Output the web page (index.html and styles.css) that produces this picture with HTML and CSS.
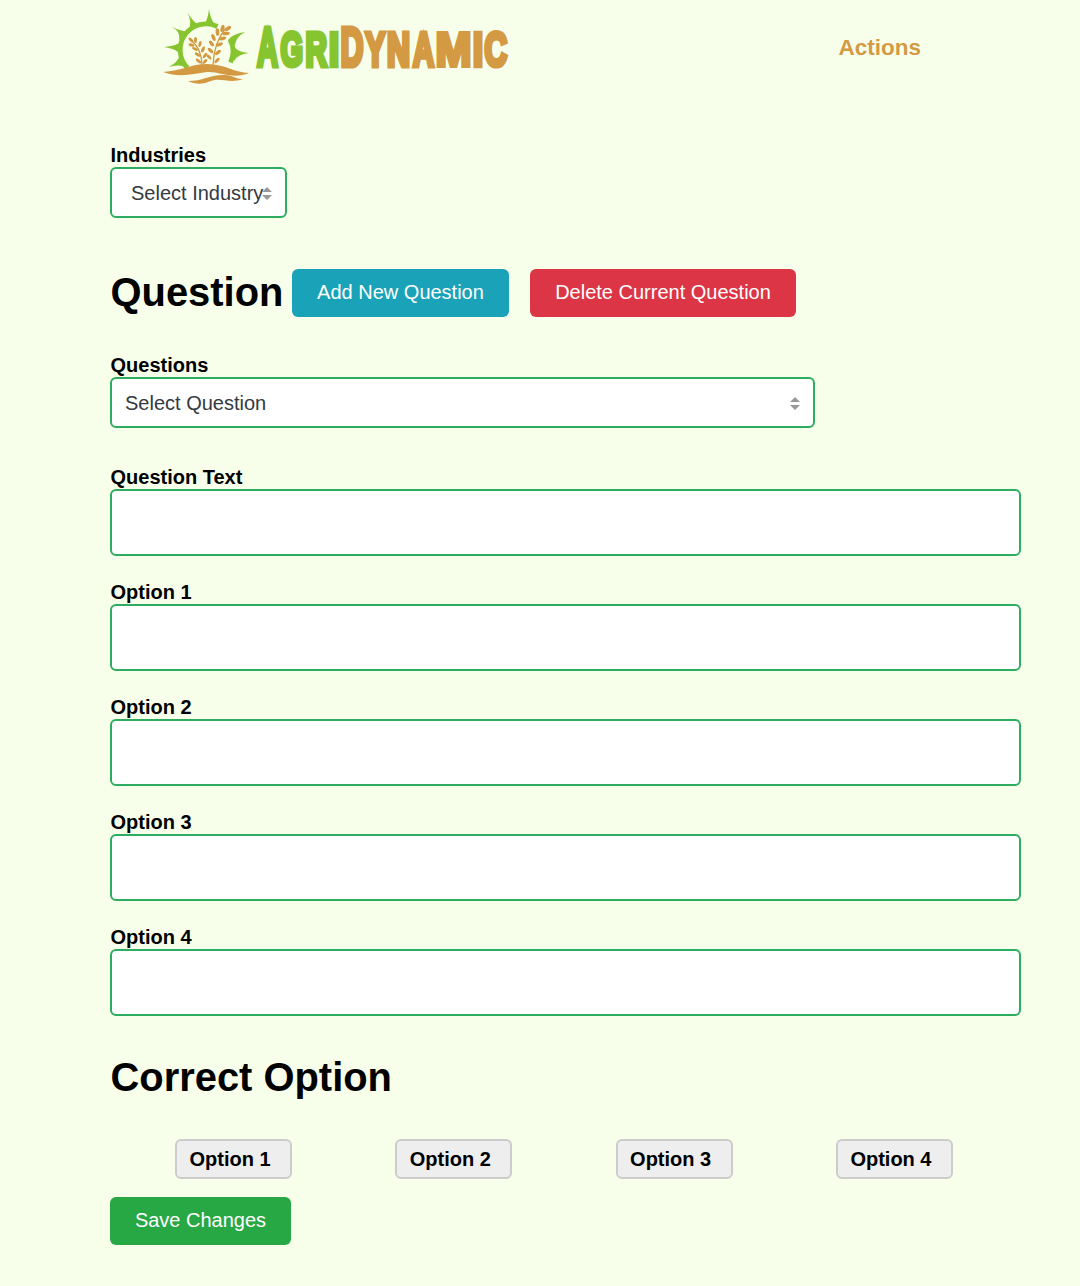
FILE: index.html
```html
<!DOCTYPE html>
<html lang="en">
<head>
<meta charset="utf-8">
<title>AgriDynamic</title>
<link rel="stylesheet" href="styles.css">
</head>
<body>
<header class="header">
  <svg class="logo" width="370" height="90" viewBox="160 0 370 90" role="img" aria-label="AgriDynamic">
    <path class="ring" d="M187.500 68A26 26 0 0 1 217.500 26.500M230 39.500A26 26 0 0 1 230.500 62.500"/>
    <g class="sun">
      <path d="M204 25Q208 19 209 9Q210.500 19 215 25ZM189 30Q192 22 187.500 12.500Q193 22 200 26ZM179 40Q181 32 172 27Q182 32 189 31ZM179.500 54Q177 49 164 47Q177 46 182 41ZM186 67Q179 64 169 67Q178 62 180 55ZM228 40Q232 34 245 32Q236 37 235 45ZM234 46Q237 52 249 53Q238 54 234 61Z"/>
    </g>
    <g class="field">
      <path d="M163 72C181 71 191 64 207 64C225 64 235 73 249 73C233 80 219 71 207 72C193 74 179 78 163 72Z"/>
      <path d="M188 81C203 81 211 74 225 75C233 75 235 79 243 79C229 84 221 77 211 81C204 84 196 85 188 81Z"/>
    </g>
    <g class="stalk">
      <path d="M191 40Q202 49 202 66M226 28Q214 42 213 65"/>
    </g>
    <g class="grain">
      <ellipse cx="191" cy="40" rx="1.5" ry="3.1" transform="rotate(-42 191 40)"/>
      <ellipse cx="195.500" cy="40" rx="1.5" ry="3"/>
      <ellipse cx="191.500" cy="45" rx="1.5" ry="3.1" transform="rotate(-75 191.500 45)"/>
      <ellipse cx="200" cy="44" rx="1.5" ry="3.1" transform="rotate(12 200 44)"/>
      <ellipse cx="195" cy="49" rx="1.5" ry="3.2" transform="rotate(-65 195 49)"/>
      <ellipse cx="203" cy="49.500" rx="1.5" ry="3.2" transform="rotate(25 203 49.500)"/>
      <ellipse cx="197.500" cy="54.500" rx="1.5" ry="3.2" transform="rotate(-58 197.500 54.500)"/>
      <ellipse cx="205" cy="55.500" rx="1.5" ry="3.2" transform="rotate(35 205 55.500)"/>
      <ellipse cx="198.500" cy="61" rx="1.5" ry="3.2" transform="rotate(-48 198.500 61)"/>
      <ellipse cx="205" cy="61.500" rx="1.5" ry="3" transform="rotate(45 205 61.500)"/>
      <ellipse cx="228" cy="28.500" rx="1.9" ry="3.5" transform="rotate(55 228 28.500)"/>
      <ellipse cx="222.500" cy="28.500" rx="1.9" ry="3.7" transform="rotate(15 222.500 28.500)"/>
      <ellipse cx="226" cy="33.500" rx="1.7" ry="3.8" transform="rotate(82 226 33.500)"/>
      <ellipse cx="217.500" cy="32" rx="1.9" ry="3.8" transform="rotate(-5 217.500 32)"/>
      <ellipse cx="222.500" cy="38.500" rx="1.8" ry="3.7" transform="rotate(75 222.500 38.500)"/>
      <ellipse cx="213.500" cy="37.500" rx="1.8" ry="3.7" transform="rotate(-20 213.500 37.500)"/>
      <ellipse cx="219.500" cy="44.500" rx="1.7" ry="3.6" transform="rotate(65 219.500 44.500)"/>
      <ellipse cx="211.500" cy="43.500" rx="1.7" ry="3.5" transform="rotate(-35 211.500 43.500)"/>
      <ellipse cx="218" cy="52.500" rx="1.7" ry="3.5" transform="rotate(50 218 52.500)"/>
      <ellipse cx="210.500" cy="50.500" rx="1.7" ry="3.5" transform="rotate(-45 210.500 50.500)"/>
      <ellipse cx="217" cy="60.500" rx="1.6" ry="3.4" transform="rotate(42 217 60.500)"/>
      <ellipse cx="209" cy="57" rx="1.5" ry="3.1" transform="rotate(-45 209 57)"/>
    </g>
    <text class="wordmark" y="65.500"><tspan class="green cap" x="257" textLength="21" lengthAdjust="spacingAndGlyphs">A</tspan><tspan class="green" x="280.500" textLength="22.500" lengthAdjust="spacingAndGlyphs">G</tspan><tspan class="green" x="305.500" textLength="21.500" lengthAdjust="spacingAndGlyphs">R</tspan><tspan class="green narrow" x="328.800" textLength="10.500" lengthAdjust="spacingAndGlyphs">I</tspan><tspan class="cap" x="340.500" textLength="23" lengthAdjust="spacingAndGlyphs">D</tspan><tspan x="365.500" textLength="19.500" lengthAdjust="spacingAndGlyphs">Y</tspan><tspan x="387" textLength="23" lengthAdjust="spacingAndGlyphs">N</tspan><tspan x="413" textLength="21" lengthAdjust="spacingAndGlyphs">A</tspan><tspan class="wide" x="435.500" textLength="36" lengthAdjust="spacingAndGlyphs">M</tspan><tspan class="narrow" x="472.800" textLength="10.500" lengthAdjust="spacingAndGlyphs">I</tspan><tspan x="484.500" textLength="22.500" lengthAdjust="spacingAndGlyphs">C</tspan></text>
  </svg>
  <a class="actions">Actions</a>
</header>
<main class="content">
  <div class="field-group">
    <label class="label">Industries</label>
    <div class="select select-small"><span>Select Industry</span><svg class="arrows" width="10" height="13" viewBox="0 0 10 13"><path d="M0 5L5 0L10 5ZM0 8L5 13L10 8Z"/></svg></div>
  </div>
  <div class="question-bar">
    <h1 class="title">Question</h1>
    <button class="btn info">Add New Question</button>
    <button class="btn danger">Delete Current Question</button>
  </div>
  <div class="field-group">
    <label class="label">Questions</label>
    <div class="select select-wide"><span>Select Question</span><svg class="arrows" width="10" height="13" viewBox="0 0 10 13"><path d="M0 5L5 0L10 5ZM0 8L5 13L10 8Z"/></svg></div>
  </div>
  <div class="inputs">
    <div><label class="label" for="question">Question Text</label><input class="input" id="question"></div>
    <div><label class="label" for="o1">Option 1</label><input class="input" id="o1"></div>
    <div><label class="label" for="o2">Option 2</label><input class="input" id="o2"></div>
    <div><label class="label" for="o3">Option 3</label><input class="input" id="o3"></div>
    <div><label class="label" for="o4">Option 4</label><input class="input" id="o4"></div>
  </div>
  <h1 class="title correct">Correct Option</h1>
  <div class="choices">
    <button class="choice">Option 1</button>
    <button class="choice">Option 2</button>
    <button class="choice">Option 3</button>
    <button class="choice">Option 4</button>
  </div>
  <button class="btn save">Save Changes</button>
</main>
</body>
</html>
```
FILE: styles.css
```css
* { box-sizing: border-box; }
body {
  margin: 0;
  min-height: 1286px;
  background: #f7ffeb;
  color: #000;
  font: 20px/24px "Liberation Sans", Arial, sans-serif;
}
button, input { font: inherit; margin: 0; }
.header {
  display: flex;
  justify-content: space-between;
  height: 143px;
  padding: 0 159px 0 160px;
}
.logo { display: block; }
.sun, .green { fill: #87c530; }
.ring { fill: none; stroke: #87c530; stroke-width: 4.8; }
.field, .grain { fill: #d49a43; }
.stalk { fill: none; stroke: #d49a43; stroke-width: 1.3; }
.wordmark {
  font-size: 48px;
  font-weight: bold;
  fill: #d49a43;
  stroke: #d49a43;
  stroke-width: 5.2px;
}
.wordmark .green { fill: #87c530; stroke: #87c530; }
.wordmark .cap { font-size: 55px; }
.wordmark .wide { stroke-width: 4px; }
.wordmark .narrow { stroke-width: 4.5px; }
.actions { margin-top: 36px; color: #d49a43; font-size: 22.5px; font-weight: bold; }
.content { width: 911px; margin-left: 110px; }
.label { display: block; height: 24px; padding-left: 0.5px; font-weight: bold; }
.select {
  display: flex;
  align-items: center;
  justify-content: space-between;
  height: 51px;
  padding: 0 13.5px 0 13px;
  border: 2px solid #2cad60;
  border-radius: 6px;
  background: #fff;
  color: #343a40;
}
.select-small { width: 177px; padding-left: 19px; padding-right: 13px; }
.select-small span { width: 130px; white-space: nowrap; }
.select-wide { width: 705px; }
.arrows { flex: none; fill: #999; margin-top: 2px; }
.question-bar { display: flex; height: 48px; margin: 51px 0 36px; }
.title { margin: 0; padding-left: 0.5px; font-size: 39.9px; line-height: 46px; font-weight: bold; }
.question-bar .title { width: 182px; }
.btn {
  height: 48px;
  padding: 0 0 2px;
  border: 0;
  border-radius: 6px;
  color: #fff;
}
.info { width: 217px; margin-right: 21px; background: #19a2b8; }
.danger { width: 266px; background: #dc3545; }
.inputs { display: grid; gap: 24px; margin-top: 37px; }
.input {
  display: block;
  width: 100%;
  height: 67px;
  border: 2px solid #2cad60;
  border-radius: 6px;
  background: #fff;
}
.correct { margin-top: 38px; }
.choices {
  display: grid;
  grid-template-columns: repeat(4, 220.3px);
  margin: 39px 0 18px 65px;
}
.choice {
  width: 117px;
  height: 40px;
  padding: 0 0 0 12.5px;
  border: 2px solid #ccc;
  border-radius: 6px;
  background: #eee;
  color: #000;
  font-weight: bold;
  text-align: left;
}
.save { display: block; width: 181px; background: #28a745; }
```
